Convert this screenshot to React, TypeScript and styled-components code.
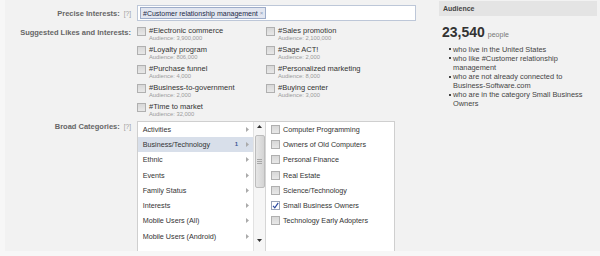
import React from "react";
import styled, { createGlobalStyle } from "styled-components";

const GlobalStyle = createGlobalStyle`
  html, body { margin: 0; padding: 0; background: #f7f7f7; }
  body { font-family: "Liberation Sans", Arial, sans-serif; color: #333; }
  * { box-sizing: border-box; }
`;

const Page = styled.div`
  display: flex;
  margin-left: 5px;
  width: 595px;
  height: 251px;
  background: #f2f2f2;
`;

const Form = styled.div`
  width: 434px;
  display: flex;
  flex-direction: column;
  padding-top: 5px;
`;

const FieldRow = styled.div<{ $mt?: number; $center?: boolean }>`
  display: grid;
  grid-template-columns: 126px 1fr;
  column-gap: 6px;
  align-items: ${(p) => (p.$center ? "center" : "start")};
  margin-top: ${(p) => p.$mt ?? 0}px;
`;

const Label = styled.div<{ $pt?: number }>`
  display: flex;
  justify-content: flex-end;
  align-items: baseline;
  gap: 4px;
  font-weight: bold;
  font-size: 7.5px;
  line-height: 9px;
  color: #666;
  white-space: nowrap;
  padding-top: ${(p) => p.$pt ?? 0}px;
`;

const Help = styled.span`
  font-weight: normal;
  font-size: 6.5px;
  color: #9a9a9a;
`;

const InputBox = styled.div`
  width: 279px;
  height: 16px;
  border: 1px solid #bdc7d8;
  background: #fff;
  padding: 0 2px;
  display: flex;
  align-items: center;
`;

const Token = styled.span`
  display: inline-flex;
  align-items: center;
  gap: 2px;
  height: 12px;
  padding: 0 2px;
  border: 1px solid #9dacc9;
  background: #e2e6f0;
  color: #1c2a47;
  font-size: 7px;
  white-space: nowrap;
`;

const TokenX = styled.span`
  color: #8a9ab8;
  font-size: 6px;
`;

const SuggestGrid = styled.div`
  display: grid;
  grid-template-columns: 129px 129px;
  grid-template-rows: repeat(5, auto);
  grid-auto-flow: column;
  row-gap: 3px;
`;

const Suggest = styled.div`
  display: flex;
  gap: 3px;
`;

const Box = styled.span<{ $checked?: boolean; $mt?: number }>`
  flex: none;
  width: 9px;
  height: 9px;
  margin-top: ${(p) => p.$mt ?? 0}px;
  border: 1px solid ${(p) => (p.$checked ? "#9aa4b8" : "#b0b0b0")};
  background: ${(p) => (p.$checked ? "#fff" : "linear-gradient(#d8d8d8, #e8e8e8)")};
  display: flex;
  align-items: center;
  justify-content: center;
`;

const SuggestText = styled.div`
  display: flex;
  flex-direction: column;
`;

const SuggestTitle = styled.span`
  font-size: 7.5px;
  line-height: 9px;
  color: #333;
  white-space: nowrap;
`;

const SuggestSub = styled.span`
  font-size: 5.8px;
  line-height: 7px;
  color: #9a9a9a;
  white-space: nowrap;
`;

const CatBox = styled.div`
  width: 258px;
  height: 134px;
  border: 1px solid #cfcfcf;
  background: #fff;
  display: flex;
`;

const Menu = styled.div`
  width: 115px;
  display: flex;
  flex-direction: column;
`;

const MenuItem = styled.div<{ $active?: boolean }>`
  height: 15.3px;
  display: flex;
  align-items: center;
  padding: 0 4px 0 4.7px;
  font-size: 7.2px;
  color: #333;
  background: ${(p) => (p.$active ? "#d8dfea" : "transparent")};
  white-space: nowrap;
`;

const MenuLabel = styled.span`
  flex: 1;
`;

const Count = styled.span`
  font-size: 6px;
  font-weight: bold;
  color: #3b5998;
  margin-right: 8px;
`;

const Scrollbar = styled.div`
  width: 13px;
  border-left: 1px solid #e2e2e2;
  border-right: 1px solid #d6d6d6;
  background: #f6f6f6;
  display: flex;
  flex-direction: column;
  align-items: center;
  padding-top: 1px;
`;

const ScrollArrow = styled.div<{ $mt?: number }>`
  height: 8px;
  display: flex;
  align-items: center;
  justify-content: center;
  margin-top: ${(p) => p.$mt ?? 0}px;
`;

const Thumb = styled.div`
  margin-top: 4px;
  width: 10px;
  height: 53px;
  border: 1px solid #bdbdbd;
  border-radius: 2px;
  background: linear-gradient(90deg, #e6e6e6, #d4d4d4);
  display: flex;
  align-items: center;
  justify-content: center;
`;

const Checklist = styled.div`
  flex: 1;
  padding-left: 5px;
  display: flex;
  flex-direction: column;
`;

const CheckItem = styled.div`
  height: 15.3px;
  display: flex;
  align-items: center;
  gap: 3px;
  font-size: 7.2px;
  color: #333;
  white-space: nowrap;
`;

const Audience = styled.div`
  width: 158px;
  padding-top: 1px;
  display: flex;
  flex-direction: column;
`;

const AudienceHeader = styled.div`
  height: 14.7px;
  background: #e4e4e4;
  padding-left: 4px;
  display: flex;
  align-items: center;
  font-weight: bold;
  font-size: 7px;
  color: #444;
`;

const Reach = styled.div`
  margin-top: 9px;
  padding-left: 3px;
  display: flex;
  align-items: baseline;
  gap: 3px;
`;

const ReachNum = styled.span`
  font-weight: bold;
  font-size: 14px;
  line-height: 14px;
  color: #333;
`;

const ReachUnit = styled.span`
  font-size: 7px;
  color: #777;
`;

const Bullets = styled.ul`
  list-style: none;
  margin: 6px 0 0 0;
  padding: 0 0 0 10px;
  display: flex;
  flex-direction: column;
`;

const BulletItem = styled.li`
  display: flex;
  gap: 2px;
  font-size: 7.4px;
  line-height: 9.1px;
  color: #444;
`;

const Dot = styled.span`
  flex: none;
  width: 2px;
  height: 2px;
  margin-top: 3.6px;
  background: #444;
`;

const NoWrap = styled.span`
  white-space: nowrap;
`;

const Caret = () => (
  <svg width="3" height="5" viewBox="0 0 3 5">
    <path d="M0 0 L3 2.5 L0 5 Z" fill="#aaa" />
  </svg>
);

const Check = () => (
  <svg width="7" height="7" viewBox="0 0 7 7">
    <path d="M1 3.8 L2.8 5.8 L6.2 0.8" stroke="#2b4aa0" strokeWidth="1.2" fill="none" />
  </svg>
);

const suggestions = [
  ["#Electronic commerce", "3,900,000"],
  ["#Loyalty program", "806,000"],
  ["#Purchase funnel", "4,000"],
  ["#Business-to-government", "2,000"],
  ["#Time to market", "32,000"],
  ["#Sales promotion", "2,100,000"],
  ["#Sage ACT!", "2,000"],
  ["#Personalized marketing", "8,000"],
  ["#Buying center", "3,000"],
];

const categories = [
  "Activities",
  "Business/Technology",
  "Ethnic",
  "Events",
  "Family Status",
  "Interests",
  "Mobile Users (All)",
  "Mobile Users (Android)",
];

const subcats = [
  ["Computer Programming", false],
  ["Owners of Old Computers", false],
  ["Personal Finance", false],
  ["Real Estate", false],
  ["Science/Technology", false],
  ["Small Business Owners", true],
  ["Technology Early Adopters", false],
] as const;

const reachLines: React.ReactNode[] = [
  "who live in the United States",
  "who like #Customer relationship management",
  <>
    who are not already connected to <NoWrap>Business-Software.com</NoWrap>
  </>,
  "who are in the category Small Business Owners",
];

export default function App() {
  return (
    <>
      <GlobalStyle />
      <Page>
        <Form>
          <FieldRow $center>
            <Label>
              Precise Interests: <Help>[?]</Help>
            </Label>
            <InputBox>
              <Token>
                #Customer relationship management <TokenX>×</TokenX>
              </Token>
            </InputBox>
          </FieldRow>
          <FieldRow $mt={4.5}>
            <Label $pt={2.5}>Suggested Likes and Interests:</Label>
            <SuggestGrid>
              {suggestions.map(([t, a]) => (
                <Suggest key={t}>
                  <Box $mt={1.2} />
                  <SuggestText>
                    <SuggestTitle>{t}</SuggestTitle>
                    <SuggestSub>Audience: {a}</SuggestSub>
                  </SuggestText>
                </Suggest>
              ))}
            </SuggestGrid>
          </FieldRow>
          <FieldRow $mt={3}>
            <Label $pt={1.5}>
              Broad Categories: <Help>[?]</Help>
            </Label>
            <CatBox>
              <Menu>
                {categories.map((c, i) => (
                  <MenuItem key={c} $active={i === 1}>
                    <MenuLabel>{c}</MenuLabel>
                    {i === 1 && <Count>1</Count>}
                    <Caret />
                  </MenuItem>
                ))}
              </Menu>
              <Scrollbar>
                <ScrollArrow>
                  <svg width="5" height="3" viewBox="0 0 5 3">
                    <path d="M0 3 L2.5 0 L5 3 Z" fill="#333" />
                  </svg>
                </ScrollArrow>
                <Thumb>
                  <svg width="5" height="5" viewBox="0 0 5 5">
                    <path d="M0 0.5 H5 M0 2.5 H5 M0 4.5 H5" stroke="#999" strokeWidth="0.8" />
                  </svg>
                </Thumb>
                <ScrollArrow $mt={49}>
                  <svg width="5" height="3" viewBox="0 0 5 3">
                    <path d="M0 0 L2.5 3 L5 0 Z" fill="#333" />
                  </svg>
                </ScrollArrow>
              </Scrollbar>
              <Checklist>
                {subcats.map(([s, c]) => (
                  <CheckItem key={s}>
                    <Box $checked={c}>{c && <Check />}</Box>
                    {s}
                  </CheckItem>
                ))}
              </Checklist>
            </CatBox>
          </FieldRow>
        </Form>
        <Audience>
          <AudienceHeader>Audience</AudienceHeader>
          <Reach>
            <ReachNum>23,540</ReachNum>
            <ReachUnit>people</ReachUnit>
          </Reach>
          <Bullets>
            {reachLines.map((l, i) => (
              <BulletItem key={i}>
                <Dot />
                <span>{l}</span>
              </BulletItem>
            ))}
          </Bullets>
        </Audience>
      </Page>
    </>
  );
}
